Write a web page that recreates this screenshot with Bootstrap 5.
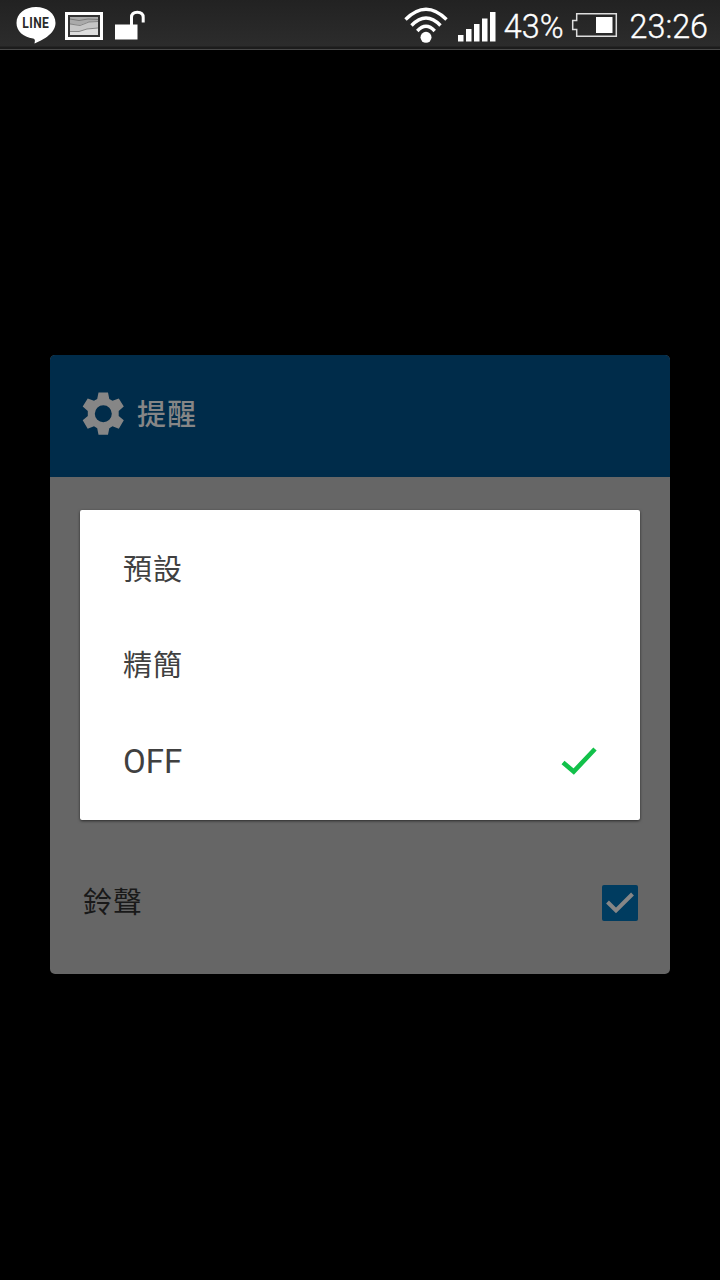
<!DOCTYPE html>
<html lang="zh-Hant">
<head>
  <meta charset="UTF-8">
  <meta name="viewport" content="width=device-width, initial-scale=1">
  <title>提醒</title>
  <link href="https://cdn.jsdelivr.net/npm/bootstrap@5.3.3/dist/css/bootstrap.min.css" rel="stylesheet">
  <style>
    body {
      background-color: #000;
      font-family: Roboto, "Noto Sans CJK TC", sans-serif;
      font-size: 29px;
      line-height: 40px;
      letter-spacing: 1px;
      color: #404040;
    }

    svg {
      display: block;
      flex-shrink: 0;
    }

    .status-bar {
      height: 50px;
      padding: 0 12px 0 16px;
      background: linear-gradient(#222, #2c2c2c 46px, #1c1c1c 47px, #1c1c1c 49px, #484848 49px);
      color: #fff;
      font-size: 32.300px;
      letter-spacing: 0;
    }

    .status-text {
      font-weight: 300;
      -webkit-text-stroke: 0.35px #fff;
      padding-top: 4px;
      line-height: 46px;
      white-space: nowrap;
    }

    .panel {
      width: 620px;
      height: 619px;
      margin-top: 305px;
      border: 0;
      border-radius: 5px;
      background-color: #666;
      overflow: hidden;
    }

    .panel-head {
      height: 122px;
      padding: 0 32px 4px;
      background-color: #002c4a;
      color: #868686;
    }

    .head-label {
      padding-top: 1px;
    }

    .panel-row {
      height: 143px;
      padding: 0 32px;
      color: #191919;
    }

    .row-label {
      padding-top: 1px;
      padding-left: 1px;
    }

    /* option list lies over the panel */
    .option-menu {
      top: 155px;
      left: 30px;
      width: 560px;
      height: 310px;
      padding: 11px 0;
      border-radius: 2px;
      background-color: #fff;
      box-shadow: 0 1px 3px rgba(0, 0, 0, .6);
    }

    .option-item {
      height: 96px;
      padding: 2px 43px 0;
      border: 0;
      background: none;
      color: #404040;
      letter-spacing: 1px;
    }

    .latin {
      font-size: 33px;
      letter-spacing: 0;
    }
  </style>
</head>
<body>

  <header class="status-bar d-flex justify-content-between">
    <div class="d-flex">
      <svg width="40" height="48" viewBox="16 0 40 48">
        <path d="M36 7C25 7 16.500 13.500 16.500 23C16.500 31 23 37 33 38.500C35.500 39 35 41 34.500 43.500C41 41 55.500 34 55.500 23C55.500 13.500 47 7 36 7Z" fill="#fff"/>
        <text x="22.300" y="27.600" textLength="27" lengthAdjust="spacingAndGlyphs" font-family="Roboto, sans-serif" font-weight="700" font-size="14" fill="#2a2a2a" letter-spacing=".5">LINE</text>
      </svg>
      <svg width="56" height="48" viewBox="56 0 56 48">
        <path d="M65 12H103V40H65Z" fill="#fff"/>
        <path d="M68 15H100V37H68Z" fill="#333"/>
        <path d="M70 17H98V35H70Z" fill="#ddd"/>
        <path d="M70 17H98V21L88 22L80 25L70 24Z" fill="#aaa"/>
        <path d="M70 24L80 25.500L90 22L98 21V28L86 29L79 32L70 31Z" fill="#c6c6c6"/>
        <path d="M70 19L79 20.500L88 19L98 19.500M70 24L80 25.500L89 22L98 21.500M70 31.500L79 31.500L87 29L98 28" fill="none" stroke="#666" stroke-width=".7"/>
      </svg>
      <svg width="36" height="48" viewBox="112 0 36 48">
        <path d="M115 24.500H137.500V39.500H115Z" fill="#fff"/>
        <path d="M131.500 25V17.500Q131.500 12.300 137.300 12.300Q143.200 12.300 143.200 17.500V22.500" fill="none" stroke="#fff" stroke-width="3"/>
      </svg>
    </div>
    <div class="d-flex">
      <svg width="100" height="48" viewBox="404 0 100 48">
        <g fill="none" stroke="#fff" stroke-width="3.400">
          <path d="M405.500 19.500Q426 -1 446.500 19.500"/>
          <path d="M411.500 25.500Q426 10.500 440.500 25.500"/>
          <path d="M417.300 31Q426 21.500 434.700 31"/>
        </g>
        <circle cx="426" cy="37.300" r="5.500" fill="#fff"/>
        <path d="M458 35H463.500V41.500H458ZM466 29H471.500V41.500H466ZM474 24H479.500V41.500H474ZM482 18.500H487.500V41.500H482ZM490 12H495.500V41.500H490Z" fill="#fff"/>
      </svg>
      <span class="status-text">43%</span>
      <svg width="66" height="48" viewBox="564 0 66 48">
        <path d="M576.700 13.700H616.300V36.300H576.700V29.500H572.700V20.500H576.700Z" fill="none" stroke="#ddd" stroke-width="1.500"/>
        <path d="M596 17H612.500V33H596Z" fill="#fff"/>
      </svg>
      <span class="status-text">23:26</span>
    </div>
  </header>

  <main class="d-flex justify-content-center">
    <section class="card panel position-relative">
      <div class="panel-head d-flex align-items-center">
        <svg width="43" height="44" viewBox="82 392 43 44">
          <path fill-rule="evenodd" fill="#868686" d="M98.500 392.500H108L109.300 399L112.500 400.800L118.800 398.500L123.800 406.500L118.700 411V416L123.800 420.300L118.800 428.800L112.500 426.300L109.300 428.300L108 434.800H98.500L97.200 428.300L94 426.300L87.700 428.800L82.700 420.300L87.800 416V411L82.700 406.500L87.700 398.500L94 400.800L97.200 399ZM103.300 405.200A8.500 8.500 0 1 0 103.300 422.200A8.500 8.500 0 1 0 103.300 405.200Z"/>
        </svg>
        <span class="head-label fw-medium ms-2 ps-1">提醒</span>
      </div>

      <div class="panel-row d-flex justify-content-between align-items-center mt-auto">
        <span class="row-label">鈴聲</span>
        <svg width="36" height="36" viewBox="0 0 36 36">
          <rect width="36" height="36" rx="2" fill="#003c60"/>
          <path d="M5.500 17L14 25.500L30.500 9" fill="none" stroke="#868686" stroke-width="4"/>
        </svg>
      </div>

      <div class="option-menu position-absolute">
        <button class="option-item d-flex w-100 align-items-center">預設</button>
        <button class="option-item d-flex w-100 align-items-center">精簡</button>
        <button class="option-item d-flex w-100 align-items-center justify-content-between">
          <span class="latin">OFF</span>
          <svg width="36" height="30" viewBox="561 747 36 30">
            <path d="M563 762.500L573.700 771.500L595 749" fill="none" stroke="#12c14a" stroke-width="4.600"/>
          </svg>
        </button>
      </div>
    </section>
  </main>

  <script src="https://cdn.jsdelivr.net/npm/bootstrap@5.3.3/dist/js/bootstrap.bundle.min.js"></script>
</body>
</html>
